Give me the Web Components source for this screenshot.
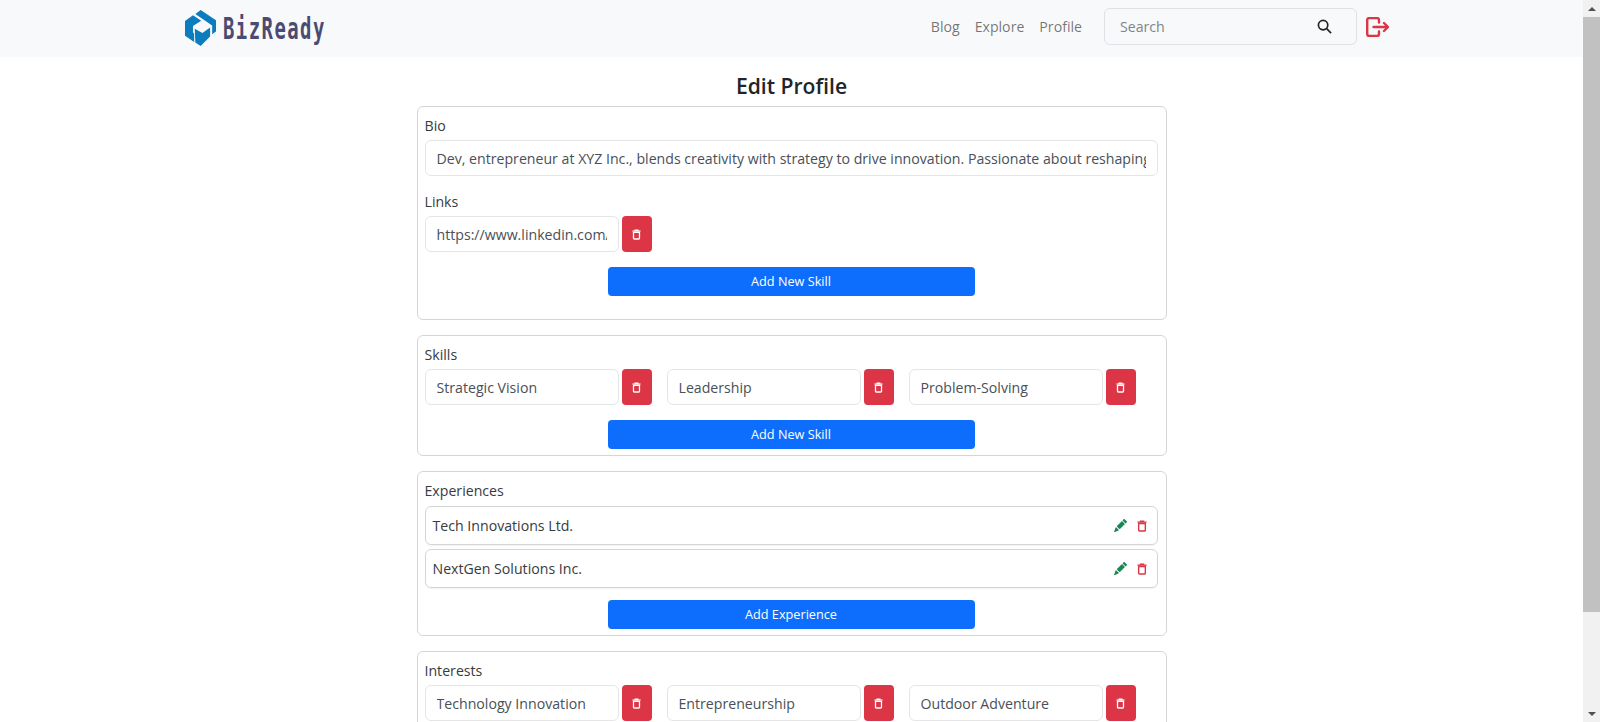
<!DOCTYPE html>
<html>
<head>
<meta charset="utf-8">
<title>Edit Profile</title>
<style>
    html, body { margin: 0; height: 100%; overflow: hidden; }
    body { font-family: "Open Sans", "Noto Sans", sans-serif; font-size: 14.15px; color: #212529; background: #fff; }
</style>
</head>
<body>
<profile-page></profile-page>

<script>
const TRASH = `<svg viewBox="0 0 12 14" width="10" height="12" fill="none" stroke="currentColor" stroke-width="1.7"><path d="M2 4h8v8a1 1 0 0 1-1 1H3a1 1 0 0 1-1-1z"/><path d="M.5 2.3h11M4 2V1h4v1" stroke-width="1.4"/></svg>`;

class BizNavbar extends HTMLElement {
    constructor() {
        super();
        this.attachShadow({mode: 'open'}).innerHTML = `
            <style>
                :host { display: flex; align-items: center; box-sizing: border-box; height: 57px; background: #f8f9fa; padding: 0 209px 4px 185px; }
                .logo { display: flex; align-items: center; gap: 7px; margin-top: 3px; }
                .word { font: bold 31px/1 "DejaVu Sans Mono", monospace; color: #4a4a72; display: inline-block; width: 100px; transform: scaleX(.61); transform-origin: left center; letter-spacing: 2.4px; white-space: nowrap; }
                nav { margin-left: auto; display: flex; gap: 15px; color: rgba(0,0,0,.55); }
                .search { margin-left: 22px; width: 253px; height: 37px; box-sizing: border-box; border: 1px solid #dee2e6; border-radius: 6px; display: flex; align-items: center; justify-content: space-between; padding: 0 24px 0 15px; color: #7c858d; }
                .search svg { color: #212529; }
                .out { margin-left: 9px; margin-right: -15px; display: flex; color: #dc3545; }
            </style>
            <div class="logo">
                <svg width="31" height="36" viewBox="15 15 105 105" preserveAspectRatio="none" fill="#0b7dbd">
                    <path d="M68 15 120 45V78L107 86V60L76 42 50 27Z"/>
                    <path d="M42 30 70 46 42 62V79L46 85V108L15 90V47Z"/>
                    <path d="M48 70 74 82 100 66V92L68 120 50 110Z"/>
                </svg>
                <span class="word">BizReady</span>
            </div>
            <nav><span>Blog</span><span>Explore</span><span>Profile</span></nav>
            <div class="search">
                <span>Search</span>
                <svg width="15" height="15" viewBox="0 0 16 16" fill="none" stroke="currentColor" stroke-width="1.8"><circle cx="6.500" cy="6.500" r="5"/><path d="m10.300 10.300 4.700 4.700"/></svg>
            </div>
            <div class="out">
                <svg width="23" height="20" viewBox="0 0 23 20" fill="none" stroke="currentColor" stroke-width="2.400" stroke-linecap="round" stroke-linejoin="round"><path d="M13 5.500V3a2 2 0 0 0-2-2H3.200a2 2 0 0 0-2 2v14a2 2 0 0 0 2 2H11a2 2 0 0 0 2-2v-2.500"/><path d="M7.500 10H21.500M18 6l4 4-4 4"/></svg>
            </div>`;
    }
}

class BizSection extends HTMLElement {
    constructor() {
        super();
        this.attachShadow({mode: 'open'}).innerHTML = `
            <style>
                :host { display: block; box-sizing: border-box; width: 750px; border: 1px solid #d3d6d9; border-radius: 6px; padding: 6px 8px 6px 7px; }
            </style>
            <slot></slot>`;
    }
}

class BizField extends HTMLElement {
    constructor() {
        super();
        this.attachShadow({mode: 'open'}).innerHTML = `
            <style>
                :host { display: block; flex: 1; min-width: 0; height: 36px; box-sizing: border-box; border: 1px solid #e3e6e9; border-radius: 6px; padding: 0 11px; background: #fff; color: #495057; }
                div { height: 34px; line-height: 35px; white-space: nowrap; overflow: hidden; }
            </style>
            <div><slot></slot></div>`;
    }
}

class BizDelete extends HTMLElement {
    constructor() {
        super();
        this.attachShadow({mode: 'open'}).innerHTML = `
            <style>
                :host { display: flex; align-items: center; justify-content: center; flex: none; width: 30px; height: 36px; border-radius: 4px; background: #dc3545; color: #fff; }
                svg { width: 9px; height: 11px; }
            </style>
            ${TRASH}`;
    }
}

// input + delete button pair
class BizTag extends HTMLElement {
    constructor() {
        super();
        this.attachShadow({mode: 'open'}).innerHTML = `
            <style>
                :host { display: flex; gap: 3px; width: 227px; }
            </style>
            <biz-field><slot></slot></biz-field>
            <biz-delete></biz-delete>`;
    }
}

class BizAdd extends HTMLElement {
    constructor() {
        super();
        this.attachShadow({mode: 'open'}).innerHTML = `
            <style>
                :host { display: block; width: 367px; height: 29px; line-height: 29px; margin: 15px auto 0; border-radius: 4px; background: #0d6efd; color: #fff; text-align: center; font-size: 12.700px; }
            </style>
            <slot></slot>`;
    }
}

class BizEntry extends HTMLElement {
    constructor() {
        super();
        this.attachShadow({mode: 'open'}).innerHTML = `
            <style>
                :host { display: flex; align-items: center; height: 39px; box-sizing: border-box; border: 1px solid #d3d6d9; border-radius: 6px; padding: 0 10px 0 7px; color: #373b3e; box-shadow: 0 1px 1px rgba(0,0,0,.05); }
                .txt { flex: 1; }
                .edit { color: #198754; display: flex; margin-right: 10px; }
                .del { color: #dc3545; display: flex; }
            </style>
            <span class="txt"><slot></slot></span>
            <span class="edit"><svg width="13" height="13" viewBox="0 0 16 16" fill="currentColor"><path d="M12.850.150a.500.500 0 0 0-.700 0L10.500 1.790 14.210 5.500l1.640-1.650a.500.500 0 0 0 0-.700zM13.500 6.200 9.800 2.500 3.300 9H3.500a.500.500 0 0 1 .500.500V10h.500a.500.500 0 0 1 .500.500v.500h.500a.500.500 0 0 1 .500.500v.500h.500a.500.500 0 0 1 .500.500v.200zM6 13.700 5.900 13.500V13h-.500a.500.500 0 0 1-.500-.500V12h-.500a.500.500 0 0 1-.500-.500V11h-.500a.500.500 0 0 1-.500-.500V10h-.500a.500.500 0 0 1-.200-.040L.100 15.600a.500.500 0 0 0 .650.650z"/></svg></span>
            <span class="del">${TRASH}</span>`;
    }
}

class BizScrollbar extends HTMLElement {
    constructor() {
        super();
        this.attachShadow({mode: 'open'}).innerHTML = `
            <style>
                :host { display: flex; flex-direction: column; flex: none; width: 17px; height: 722px; background: #f1f1f1; }
                .btn { height: 17px; display: flex; align-items: center; justify-content: center; }
                .thumb { height: 595px; background: #c1c1c1; }
                .rest { flex: 1; }
                i { width: 0; height: 0; border-left: 4px solid transparent; border-right: 4px solid transparent; }
                .up i { border-bottom: 4px solid #505050; }
                .dn i { border-top: 4px solid #505050; }
            </style>
            <div class="btn up"><i></i></div>
            <div class="thumb"></div>
            <div class="rest"></div>
            <div class="btn dn"><i></i></div>`;
    }
}

class ProfilePage extends HTMLElement {
    constructor() {
        super();
        this.attachShadow({mode: 'open'}).innerHTML = `
            <style>
                :host { display: flex; height: 722px; overflow: hidden; }
                .page { flex: 1; min-width: 0; overflow: hidden; }
                main { display: flex; flex-direction: column; align-items: center; gap: 15px; }
                h1 { margin: 13px 0 -11px; font-size: 21.100px; line-height: 32px; font-weight: 600; color: #212529; }
                .label { margin: 0 0 2px; padding-top: 1px; line-height: 24px; color: #373b3e; }
                .row { display: flex; gap: 15px; }
                .mt { margin-top: 13px; margin-bottom: 2px; }
                .list { display: flex; flex-direction: column; gap: 4px; margin: 3px 0 -3px; }
                .bio { padding-bottom: 23px; }
                .sk { padding-bottom: 6px; }
            </style>
            <div class="page">
                <biz-navbar></biz-navbar>
                <main>
                    <h1>Edit Profile</h1>
                    <biz-section class="bio">
                        <div class="label">Bio</div>
                        <biz-field>Dev, entrepreneur at XYZ Inc., blends creativity with strategy to drive innovation. Passionate about reshaping industries through technology and design.</biz-field>
                        <div class="label mt">Links</div>
                        <div class="row"><biz-tag>https://www.linkedin.com/in/dev</biz-tag></div>
                        <biz-add>Add New Skill</biz-add>
                    </biz-section>
                    <biz-section class="sk">
                        <div class="label">Skills</div>
                        <div class="row"><biz-tag>Strategic Vision</biz-tag><biz-tag>Leadership</biz-tag><biz-tag>Problem-Solving</biz-tag></div>
                        <biz-add>Add New Skill</biz-add>
                    </biz-section>
                    <biz-section class="sk">
                        <div class="label">Experiences</div>
                        <div class="list"><biz-entry>Tech Innovations Ltd.</biz-entry><biz-entry>NextGen Solutions Inc.</biz-entry></div>
                        <biz-add>Add Experience</biz-add>
                    </biz-section>
                    <biz-section>
                        <div class="label">Interests</div>
                        <div class="row"><biz-tag>Technology Innovation</biz-tag><biz-tag>Entrepreneurship</biz-tag><biz-tag>Outdoor Adventure</biz-tag></div>
                    </biz-section>
                </main>
            </div>
            <biz-scrollbar></biz-scrollbar>`;
    }
}

customElements.define('biz-navbar', BizNavbar);
customElements.define('biz-section', BizSection);
customElements.define('biz-field', BizField);
customElements.define('biz-delete', BizDelete);
customElements.define('biz-tag', BizTag);
customElements.define('biz-add', BizAdd);
customElements.define('biz-entry', BizEntry);
customElements.define('biz-scrollbar', BizScrollbar);
customElements.define('profile-page', ProfilePage);
</script>
</body>
</html>
